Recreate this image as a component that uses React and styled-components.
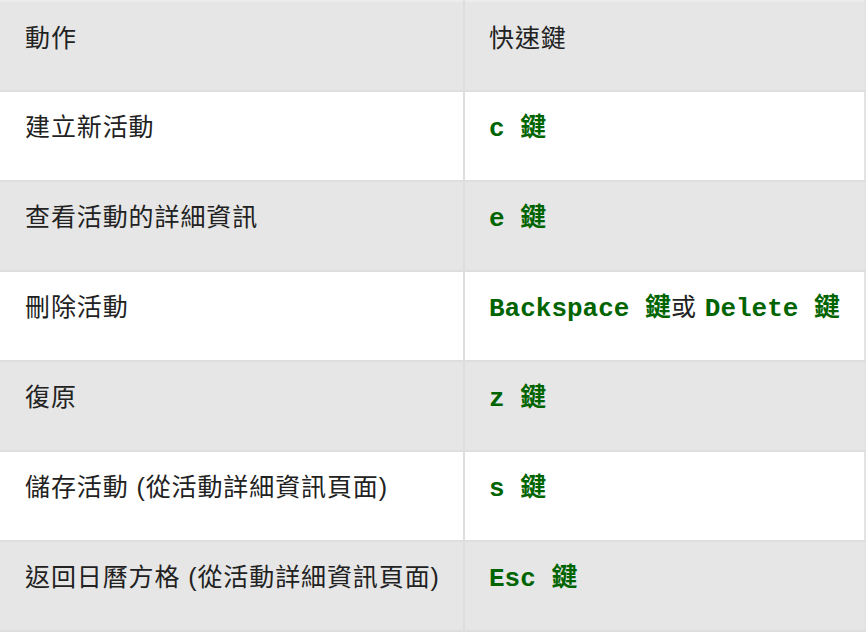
import React from "react";
import styled, { createGlobalStyle } from "styled-components";

const GlobalStyle = createGlobalStyle`
  html, body {
    margin: 0;
    padding: 0;
    background: #ffffff;
  }
  body {
    font-family: "Liberation Sans", "Noto Sans CJK TC", sans-serif;
    color: #222222;
  }
`;

const Table = styled.table`
  width: 866px;
  border-collapse: collapse;
  table-layout: fixed;
  border-top: 2px solid #ececec;
`;

const Row = styled.tr`
  background-color: ${(props) => (props.shaded ? "#e6e6e6" : "#ffffff")};
`;

const Cell = styled.td`
  height: 90px;
  box-sizing: border-box;
  padding: 19px 24px 0 25px;
  vertical-align: top;
  font-size: 25px;
  line-height: 32px;
  letter-spacing: 0.9px;
  border-bottom: 2px solid #dedede;
  white-space: nowrap;

  &:first-child {
    width: 464px;
    border-right: 2px solid #dedede;
  }
  &:last-child {
    padding-left: 24px;
    border-right: 2px solid #e4e4e4;
  }
`;

const HeadCell = styled(Cell).attrs({ as: "th" })`
  text-align: left;
  font-weight: normal;
  padding-top: 20px;
`;

const Key = styled.code`
  font-family: "Liberation Mono", "Noto Sans CJK TC", monospace;
  font-weight: bold;
  font-size: 26px;
  letter-spacing: 0;
  color: #006400;
`;

const rows = [
  { action: "建立新活動", keys: ["c"] },
  { action: "查看活動的詳細資訊", keys: ["e"] },
  { action: "刪除活動", keys: ["Backspace", "Delete"] },
  { action: "復原", keys: ["z"] },
  { action: "儲存活動 (從活動詳細資訊頁面)", keys: ["s"] },
  { action: "返回日曆方格 (從活動詳細資訊頁面)", keys: ["Esc"] },
];

export default function App() {
  return (
    <>
      <GlobalStyle />
      <Table>
        <thead>
          <Row shaded>
            <HeadCell>動作</HeadCell>
            <HeadCell>快速鍵</HeadCell>
          </Row>
        </thead>
        <tbody>
          {rows.map((row, i) => (
            <Row key={row.action} shaded={i % 2 === 1}>
              <Cell>{row.action}</Cell>
              <Cell>
                {row.keys.map((k, j) => (
                  <React.Fragment key={k}>
                    {j > 0 && "或 "}
                    <Key>{k} 鍵</Key>
                  </React.Fragment>
                ))}
              </Cell>
            </Row>
          ))}
        </tbody>
      </Table>
    </>
  );
}
